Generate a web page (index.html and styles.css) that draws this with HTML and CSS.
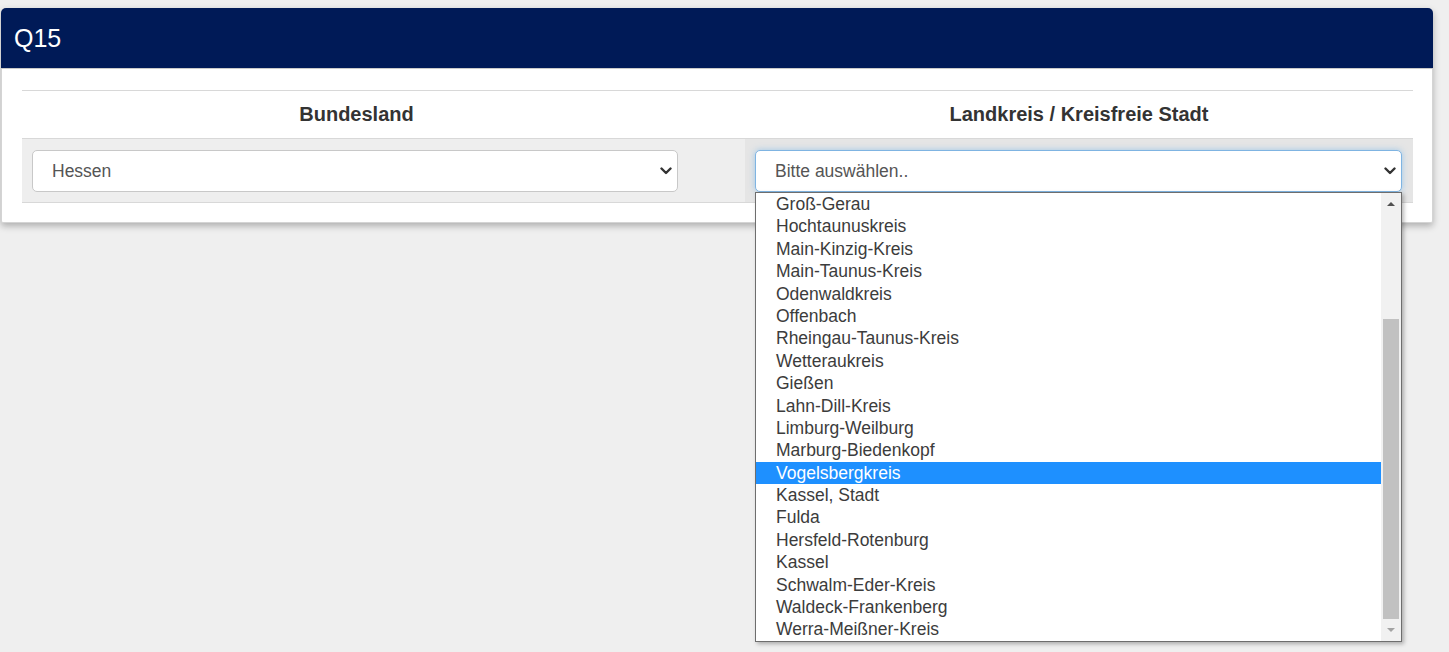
FILE: index.html
```html
<!DOCTYPE html>
<html lang="de">
<head>
<meta charset="utf-8">
<title>Q15</title>
<link rel="stylesheet" href="styles.css">
</head>
<body>
<div class="panel">
  <div class="panel-heading">Q15</div>
  <div class="panel-body">
    <div class="q-table">
      <div class="q-head">Bundesland</div>
      <div class="q-head q-gap"></div>
      <div class="q-head">Landkreis / Kreisfreie Stadt</div>

      <div class="q-cell q-cell-left">
        <div class="select">
          <span class="select-value">Hessen</span>
          <svg class="chevron" viewBox="0 0 12 8" width="12" height="8"><polyline points="1.5,1.5 6,6 10.5,1.5" fill="none" stroke="#333" stroke-width="2.4" stroke-linecap="round" stroke-linejoin="round"/></svg>
        </div>
      </div>
      <div class="q-cell q-gap"></div>
      <div class="q-cell q-cell-right">
        <div class="select select-open">
          <span class="select-value">Bitte auswählen..</span>
          <svg class="chevron" viewBox="0 0 12 8" width="12" height="8"><polyline points="1.5,1.5 6,6 10.5,1.5" fill="none" stroke="#333" stroke-width="2.4" stroke-linecap="round" stroke-linejoin="round"/></svg>
          <div class="dropdown">
            <ul class="options">
              <li>Groß-Gerau</li>
              <li>Hochtaunuskreis</li>
              <li>Main-Kinzig-Kreis</li>
              <li>Main-Taunus-Kreis</li>
              <li>Odenwaldkreis</li>
              <li>Offenbach</li>
              <li>Rheingau-Taunus-Kreis</li>
              <li>Wetteraukreis</li>
              <li>Gießen</li>
              <li>Lahn-Dill-Kreis</li>
              <li>Limburg-Weilburg</li>
              <li>Marburg-Biedenkopf</li>
              <li class="active">Vogelsbergkreis</li>
              <li>Kassel, Stadt</li>
              <li>Fulda</li>
              <li>Hersfeld-Rotenburg</li>
              <li>Kassel</li>
              <li>Schwalm-Eder-Kreis</li>
              <li>Waldeck-Frankenberg</li>
              <li>Werra-Meißner-Kreis</li>
            </ul>
            <div class="scrollbar">
              <span class="arrow arrow-up"></span>
              <div class="track"><div class="thumb"></div></div>
              <span class="arrow arrow-down"></span>
            </div>
          </div>
        </div>
      </div>
    </div>
  </div>
</div>
</body>
</html>
```
FILE: styles.css
```css
* {
  box-sizing: border-box;
}

html,
body {
  height: 100%;
}

body {
  margin: 0;
  padding: 8px 0 0 1px;
  background: #efefef;
  font-family: "Liberation Sans", Arial, sans-serif;
  color: #333;
  overflow: hidden;
}

/* card */
.panel {
  width: 1432px;
  background: #fff;
  border: 1px solid #d4d4d4;
  border-top: none;
  border-radius: 5px 5px 2px 2px;
  box-shadow: 0 3px 7px rgba(0, 0, 0, 0.28);
}

.panel-heading {
  height: 61px;
  padding: 0 12px;
  display: flex;
  align-items: center;
  background: #001a57;
  color: #fff;
  font-size: 25px;
  border-radius: 5px 5px 0 0;
  border-bottom: 1px solid #c9c9c9;
  margin: 0 -1px;
  padding-left: 13px;
}

.panel-body {
  padding: 21px 19px 19px 20px;
}

/* question table */
.q-table {
  display: grid;
  grid-template-columns: 669px 54px 1fr;
  border-top: 1px solid #d8d8d8;
  border-bottom: 1px solid #d8d8d8;
}

.q-head {
  height: 48px;
  display: flex;
  align-items: center;
  justify-content: center;
  font-size: 20px;
  font-weight: bold;
  color: #333;
  border-bottom: 1px solid #d8d8d8;
}

.q-cell {
  height: 63px;
  background: #eeeeee;
  padding-top: 11px;
}

.q-cell-left {
  padding-left: 10px;
  padding-right: 13px;
}

.q-cell-right {
  background: #e5e5e5;
  padding-left: 10px;
  padding-right: 11px;
}

/* select look-alike */
.select {
  position: relative;
  height: 42px;
  display: flex;
  align-items: center;
  padding: 0 19px;
  background: #fff;
  border: 1px solid #c8c8c8;
  border-radius: 5px;
  font-size: 17.5px;
  color: #555;
}

.select-open {
  border-color: #7fb4e2;
  box-shadow: 0 0 6px rgba(102, 175, 233, 0.55);
}

.chevron {
  position: absolute;
  right: 5px;
  top: 16px;
}

/* open option list */
.dropdown {
  position: absolute;
  top: 41px;
  left: -1px;
  right: -1px;
  height: 450px;
  display: flex;
  background: #fff;
  border: 1px solid #6e6e6e;
  box-shadow: 2px 2px 4px rgba(0, 0, 0, 0.28);
  z-index: 5;
}

.options {
  flex: 1;
  list-style: none;
  margin: 0;
  padding: 0;
}

.options li {
  height: 22.4px;
  line-height: 22.4px;
  padding-left: 20px;
  font-size: 17.5px;
  color: #3c3c3c;
  white-space: nowrap;
}

.options li.active {
  background: #1e90ff;
  color: #fff;
}

.scrollbar {
  width: 20px;
  display: flex;
  flex-direction: column;
  background: #f1f1f1;
}

.arrow {
  height: 22px;
  display: flex;
  align-items: center;
  justify-content: center;
}

.arrow::before {
  content: "";
  width: 0;
  height: 0;
  border-left: 4px solid transparent;
  border-right: 4px solid transparent;
}

.arrow-up::before {
  border-bottom: 4px solid #505050;
}

.arrow-down::before {
  border-top: 4px solid #a3a3a3;
}

.track {
  flex: 1;
  padding: 0 2px;
  display: flex;
  flex-direction: column;
  justify-content: flex-end;
}

.thumb {
  height: 300px;
  margin-bottom: 0;
  background: #c1c1c1;
}
```
